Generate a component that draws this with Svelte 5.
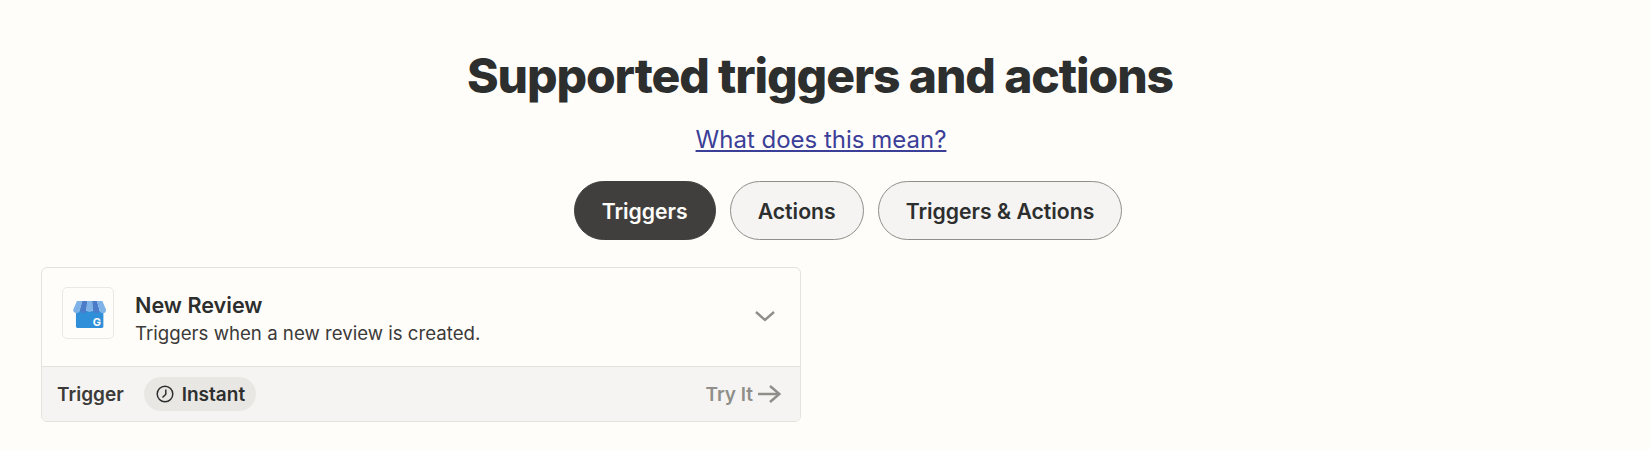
<script lang="ts">
	const tabs = ['Triggers', 'Actions', 'Triggers & Actions'];
	let active = $state('Triggers');
</script>

<main class="page">
	<h2 class="title">Supported triggers and actions</h2>
	<a class="help" href="#help">What does this mean?</a>

	<div class="tabs">
		{#each tabs as tab}
			<button class="tab" class:active={active === tab} onclick={() => (active = tab)}>{tab}</button>
		{/each}
	</div>

	<div class="grid">
		<article class="card">
			<div class="card-top">
				<div class="logo">
					<svg width="36" height="30" viewBox="0 0 36 30">
						<g transform="translate(3 3) scale(0.98)">
							<path d="M3 10h28v16a1.500 1.500 0 0 1-1.500 1.500h-25A1.500 1.500 0 0 1 3 26z" fill="#2f8fd8" />
							<path d="M4 0h5.500L7 9a3.400 3.400 0 0 1-6.800 0z" fill="#7fb2e6" />
							<path d="M9.500 0h5L13.800 9a3.400 3.400 0 0 1-6.800 0z" fill="#4a7cc9" />
							<path d="M14.500 0h5l.7 9a3.400 3.400 0 0 1-6.400 0z" fill="#7fb2e6" />
							<path d="M19.500 0h5L27 9a3.400 3.400 0 0 1-6.800 0z" fill="#4a7cc9" />
							<path d="M24.500 0H30l3.800 9A3.400 3.400 0 0 1 27 9z" fill="#7fb2e6" />
						</g>
						<text x="27" y="28" text-anchor="middle" class="g">G</text>
					</svg>
				</div>
				<div class="info">
					<div class="name">New Review</div>
					<div class="desc">Triggers when a new review is created.</div>
				</div>
				<svg class="chevron" width="24" height="14" viewBox="0 0 24 14">
					<path d="M3 3l9 8 9-8" fill="none" stroke="#8f8e8a" stroke-width="2.400" />
				</svg>
			</div>
			<div class="card-bottom">
				<span class="kind">Trigger</span>
				<span class="pill">
					<svg width="18" height="18" viewBox="0 0 18 18">
						<circle cx="9" cy="9" r="7.800" fill="none" stroke="#2d2e2e" stroke-width="1.500" />
						<path d="M9.800 4.500v4.800L6.500 12.500" fill="none" stroke="#2d2e2e" stroke-width="1.500" />
					</svg>
					Instant
				</span>
				<a class="try" href="#try">
					Try It
					<svg width="23" height="20" viewBox="0 0 23 20">
						<path d="M0 10h21.500M12 2l9.500 8-9.500 8" fill="none" stroke="#8f8e8a" stroke-width="2.500" />
					</svg>
				</a>
			</div>
		</article>
	</div>
</main>

<style>
	:global(body) {
		background: #fffdf9;
		font-family: Inter, 'Noto Sans', sans-serif;
		color: #2d2e2e;
	}

	.page {
		display: flex;
		flex-direction: column;
		align-items: center;
		height: 450px;
		padding: 40px 51px 0 41px;
		box-sizing: border-box;
	}

	.title {
		margin: 0;
		font-size: 48px;
		line-height: 72px;
		font-weight: 800;
		letter-spacing: -1.1px;
		color: #2d2e2e;
	}

	.help {
		margin-top: 12px;
		margin-left: 2px;
		font-size: 24px;
		line-height: 32px;
		color: #3b3f98;
		text-decoration: underline;
	}

	.tabs {
		display: flex;
		gap: 14px;
		margin-top: 25px;
		margin-left: 56px;
	}

	.tab {
		height: 59px;
		padding: 0 27px;
		border: 1px solid #8f8e8a;
		border-radius: 30px;
		background: #f5f4f2;
		color: #2d2e2e;
		font: 600 21.200px Inter, sans-serif;
	}

	.tab.active {
		background: #403f3e;
		border-color: #403f3e;
		color: #fffdf9;
	}

	.grid {
		align-self: stretch;
		margin-top: 27px;
	}

	.card {
		width: 760px;
		height: 155px;
		box-sizing: border-box;
		display: flex;
		flex-direction: column;
		border: 1px solid #e4e2dd;
		border-radius: 6px;
		overflow: hidden;
	}

	.card-top {
		flex: 1;
		display: flex;
		align-items: flex-start;
		padding: 19px 23px 0 20px;
		gap: 21px;
	}

	.logo {
		width: 52px;
		height: 52px;
		box-sizing: border-box;
		display: flex;
		align-items: center;
		justify-content: center;
		border: 1px solid #ebe9e5;
		border-radius: 5px;
	}

	.g {
		font: 700 11px Inter, sans-serif;
		fill: #fff;
	}

	.info {
		flex: 1;
		margin-top: 3px;
	}

	.name {
		font-size: 21.600px;
		line-height: 30px;
		font-weight: 600;
	}

	.desc {
		font-size: 18.660px;
		line-height: 27px;
		color: #3b3a39;
	}

	.chevron {
		margin-top: 22px;
	}

	.card-bottom {
		height: 54px;
		display: flex;
		align-items: center;
		padding: 0 19px 0 15px;
		background: #f5f4f2;
		border-top: 1px solid #e4e2dd;
		font-size: 19px;
		font-weight: 600;
	}

	.kind {
		color: #3b3a39;
	}

	.pill {
		display: flex;
		align-items: center;
		gap: 8px;
		height: 34px;
		margin-left: 20px;
		padding: 0 11px 0 12px;
		border-radius: 17px;
		background: #e8e7e4;
	}

	.try {
		margin-left: auto;
		display: flex;
		align-items: center;
		gap: 5px;
		color: #8f8e8a;
		text-decoration: none;
	}
</style>
